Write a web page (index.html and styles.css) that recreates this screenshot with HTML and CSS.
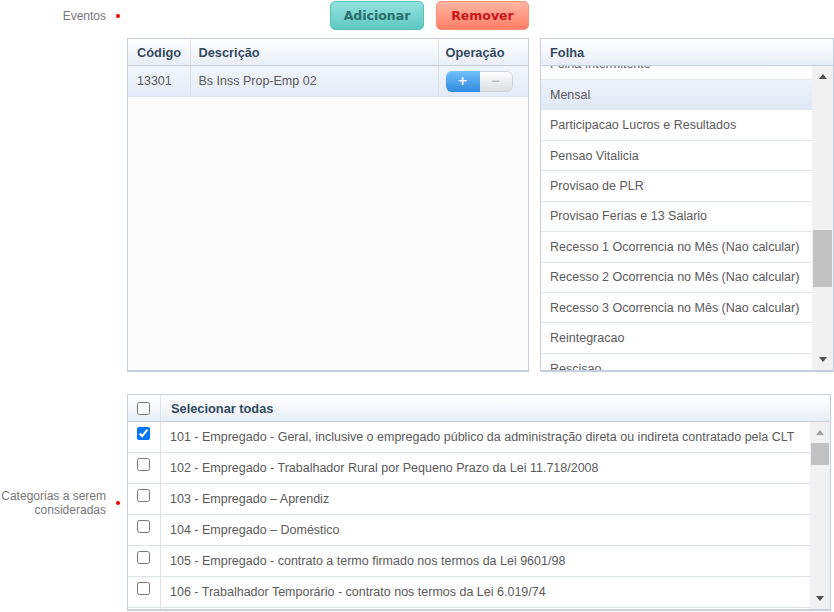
FILE: index.html
```html
<!DOCTYPE html>
<html lang="pt-BR">

<head>
  <meta charset="utf-8">
  <meta name="viewport" content="width=device-width, initial-scale=1">
  <link rel="stylesheet" href="styles.css">
  <title>Eventos e categorias</title>
</head>

<body>
  <div class="form">
    <!-- Eventos -->
    <div class="form_row">
      <div class="form_label"><span>Eventos</span><i class="req"></i></div>
      <div class="eventos">
        <div class="actions">
          <button class="btn btn_add">Adicionar</button>
          <button class="btn btn_remove">Remover</button>
        </div>
        <div class="eventos_tables">
          <div class="grid grid_eventos">
            <table class="ev_table">
              <colgroup>
                <col class="col_cod">
                <col class="col_desc">
                <col class="col_op">
              </colgroup>
              <thead>
                <tr>
                  <th>Código</th>
                  <th>Descrição</th>
                  <th>Operação</th>
                </tr>
              </thead>
              <tbody>
                <tr class="selected">
                  <td>13301</td>
                  <td>Bs Inss Prop-Emp 02</td>
                  <td>
                    <div class="toggle">
                      <span class="toggle_on">+</span><span class="toggle_off">&minus;</span>
                    </div>
                  </td>
                </tr>
              </tbody>
            </table>
          </div>

          <div class="grid grid_folha">
            <div class="grid_head"><div class="head_cell">Folha</div></div>
            <div class="grid_body">
              <div class="list_view">
                <ul class="list list_folha">
                  <li>Folha Intermitente</li>
                  <li class="selected">Mensal</li>
                  <li>Participacao Lucros e Resultados</li>
                  <li>Pensao Vitalicia</li>
                  <li>Provisao de PLR</li>
                  <li>Provisao Ferias e 13 Salario</li>
                  <li>Recesso 1 Ocorrencia no Mês (Nao calcular)</li>
                  <li>Recesso 2 Ocorrencia no Mês (Nao calcular)</li>
                  <li>Recesso 3 Ocorrencia no Mês (Nao calcular)</li>
                  <li>Reintegracao</li>
                  <li>Rescisao</li>
                  <li>Rescisao Complementar</li>
                </ul>
              </div>
              <div class="scrollbar sb_folha">
                <div class="sb_btn"><i class="arrow_up"></i></div>
                <div class="sb_thumb"></div>
                <div class="sb_fill"></div>
                <div class="sb_btn"><i class="arrow_down"></i></div>
              </div>
            </div>
          </div>
        </div>
      </div>
    </div>

    <!-- Categorias -->
    <div class="form_row form_row_cat">
      <div class="form_label"><span>Categorias a serem<br>consideradas</span><i class="req"></i></div>
      <div class="grid grid_cat">
        <div class="grid_head">
          <div class="check_cell"><input type="checkbox"></div>
          <div class="head_cell">Selecionar todas</div>
        </div>
        <div class="grid_body">
          <div class="list_view">
            <ul class="list list_cat">
              <li><div class="check_cell"><input type="checkbox" checked></div><div class="cat_text">101 - Empregado - Geral, inclusive o empregado público da administração direta ou indireta contratado pela CLT</div></li>
              <li><div class="check_cell"><input type="checkbox"></div><div class="cat_text">102 - Empregado - Trabalhador Rural por Pequeno Prazo da Lei 11.718/2008</div></li>
              <li><div class="check_cell"><input type="checkbox"></div><div class="cat_text">103 - Empregado – Aprendiz</div></li>
              <li><div class="check_cell"><input type="checkbox"></div><div class="cat_text">104 - Empregado – Doméstico</div></li>
              <li><div class="check_cell"><input type="checkbox"></div><div class="cat_text">105 - Empregado - contrato a termo firmado nos termos da Lei 9601/98</div></li>
              <li><div class="check_cell"><input type="checkbox"></div><div class="cat_text">106 - Trabalhador Temporário - contrato nos termos da Lei 6.019/74</div></li>
              <li><div class="check_cell"><input type="checkbox"></div><div class="cat_text">107 - Empregado - contrato de trabalho Verde e Amarelo</div></li>
            </ul>
          </div>
          <div class="scrollbar sb_cat">
            <div class="sb_btn"><i class="arrow_up disabled"></i></div>
            <div class="sb_thumb"></div>
            <div class="sb_fill"></div>
            <div class="sb_btn"><i class="arrow_down"></i></div>
          </div>
        </div>
      </div>
    </div>
  </div>
</body>

</html>
```

FILE: styles.css
```css
body {
  margin: 0;
  padding-top: 1px;
  background-color: #fff;
  color: #5a5a5a;
  font-family: "Liberation Sans", Arial, sans-serif;
  font-size: 12.5px;
}

/* form rows */
.form_row {
  display: flex;
}

.form_label {
  width: 127px;
  height: 29px;
  flex: none;
  box-sizing: border-box;
  padding-right: 7px;
  display: flex;
  justify-content: flex-end;
  align-items: center;
  font-size: 12px;
  line-height: 14px;
  color: #777;
  text-align: right;
}

.req {
  width: 4px;
  height: 4px;
  margin-left: 10px;
  border-radius: 50%;
  background-color: #e60000;
  flex: none;
}

.form_row_cat {
  margin-top: 22px;
}

.form_row_cat .form_label {
  height: auto;
}

/* buttons */
.eventos {
  display: flex;
  flex-direction: column;
}

.actions {
  width: 402px;
  display: flex;
  justify-content: flex-end;
  gap: 12px;
}

.btn {
  height: 29px;
  padding: 0;
  border-radius: 5px;
  font-family: "DejaVu Sans", Verdana, sans-serif;
  font-weight: bold;
  font-size: 12.5px;
  cursor: pointer;
}

.btn_add {
  width: 94px;
  border: 1px solid #5cc0b9;
  background: linear-gradient(#93e2dd, #5fc9c2);
  color: #2b6e6c;
}

.btn_remove {
  width: 93px;
  border: 1px solid #f5907a;
  background: linear-gradient(#ffb6a3, #ff7e66);
  color: #c8161b;
}

.eventos_tables {
  display: flex;
  gap: 11px;
  margin-top: 8px;
}

/* grids */
.grid {
  box-sizing: border-box;
  border: 1px solid #c6d0dc;
  border-bottom-width: 2px;
  background-color: #fff;
  display: flex;
  flex-direction: column;
}

.grid_eventos {
  width: 402px;
  height: 334px;
  background-color: #fbfbfc;
}

.grid_folha {
  width: 294px;
  height: 334px;
}

.grid_cat {
  width: 704px;
  height: 217px;
}

.grid_head {
  height: 26px;
  flex: none;
  display: flex;
  border-bottom: 1px solid #c6d0dc;
  background: linear-gradient(#ffffff, #e8eef7);
  color: #34495e;
  font-weight: bold;
  font-size: 12.8px;
}

.head_cell {
  display: flex;
  align-items: center;
  padding-left: 9px;
}

.grid_body {
  flex: 1;
  display: flex;
  min-height: 0;
}

.list_view {
  flex: 1;
  overflow: hidden;
}

.list {
  list-style: none;
  margin: 0;
  padding: 0;
}

/* eventos table */
.ev_table {
  width: 100%;
  table-layout: fixed;
  border-collapse: collapse;
}

.col_cod {
  width: 62px;
}

.col_desc {
  width: 248px;
}

.ev_table th {
  height: 26px;
  padding: 0 0 0 8px;
  border-right: 1px solid #dbe2ea;
  border-bottom: 1px solid #c6d0dc;
  background: linear-gradient(#ffffff, #e8eef7);
  color: #34495e;
  font-size: 12.8px;
  text-align: left;
}

.ev_table th:first-child,
.ev_table td:first-child {
  padding-left: 9px;
}

.ev_table th:last-child,
.ev_table td:last-child {
  border-right: none;
  padding-left: 7px;
}

.ev_table td {
  height: 30px;
  padding: 0 0 0 8px;
  border-right: 1px solid #dbe2ea;
  border-bottom: 1px solid #dbe2ea;
}

.ev_table tr.selected td {
  background: linear-gradient(#f2f6fc, #e2ebf7);
}

.toggle {
  width: 67px;
  height: 21px;
  display: flex;
  border-radius: 6px;
  overflow: hidden;
  font-family: "DejaVu Sans", Verdana, sans-serif;
  font-weight: bold;
  font-size: 12px;
}

.toggle_on,
.toggle_off {
  display: flex;
  align-items: center;
  justify-content: center;
}

.toggle_on {
  width: 34px;
  background: linear-gradient(#74c0f8, #2e8be0);
  color: #fff;
}

.toggle_off {
  flex: 1;
  border: 1px solid #cfd4da;
  border-left: none;
  border-radius: 0 6px 6px 0;
  background: linear-gradient(#ffffff, #dcdde0);
  color: #b5b9bf;
}

/* folha list */
.list_folha {
  margin-top: -16.5px;
}

.list_folha li {
  height: 30.44px;
  box-sizing: border-box;
  padding-left: 9px;
  display: flex;
  align-items: center;
  border-bottom: 1px solid #e2e7ed;
  white-space: nowrap;
}

.list_folha li.selected {
  background: linear-gradient(#edf3fb, #dfe8f5);
}

/* categorias list */
.grid_cat .grid_head .head_cell {
  padding-left: 10px;
}

.check_cell {
  width: 33px;
  flex: none;
  box-sizing: border-box;
  border-right: 1px solid #dbe2ea;
  padding-left: 9px;
}

.grid_head .check_cell {
  display: flex;
  align-items: center;
}

.check_cell input {
  margin: 0;
  width: 13px;
  height: 13px;
}

.list_cat li {
  height: 31px;
  box-sizing: border-box;
  display: flex;
  border-bottom: 1px solid #dbe2ea;
}

.list_cat .check_cell {
  padding-top: 5px;
}

.cat_text {
  padding-left: 9px;
  display: flex;
  align-items: center;
  white-space: nowrap;
}

/* scrollbars */
.scrollbar {
  width: 21px;
  flex: none;
  display: flex;
  flex-direction: column;
  background-color: #f1f1f1;
}

.sb_cat {
  width: 20px;
}

.sb_btn {
  height: 21px;
  flex: none;
  display: flex;
  align-items: center;
  justify-content: center;
}

.sb_thumb {
  flex: none;
  margin: 0 1px;
  background-color: #c1c1c1;
}

.sb_folha .sb_thumb {
  height: 57px;
  margin-top: 143px;
}

.sb_cat .sb_thumb {
  height: 22px;
}

.sb_fill {
  flex: 1;
}

.arrow_up,
.arrow_down {
  width: 0;
  height: 0;
  border-left: 4.5px solid transparent;
  border-right: 4.5px solid transparent;
}

.arrow_up {
  border-bottom: 5px solid #505050;
}

.arrow_up.disabled {
  border-bottom-color: #a3a3a3;
}

.arrow_down {
  border-top: 5px solid #505050;
}
```
